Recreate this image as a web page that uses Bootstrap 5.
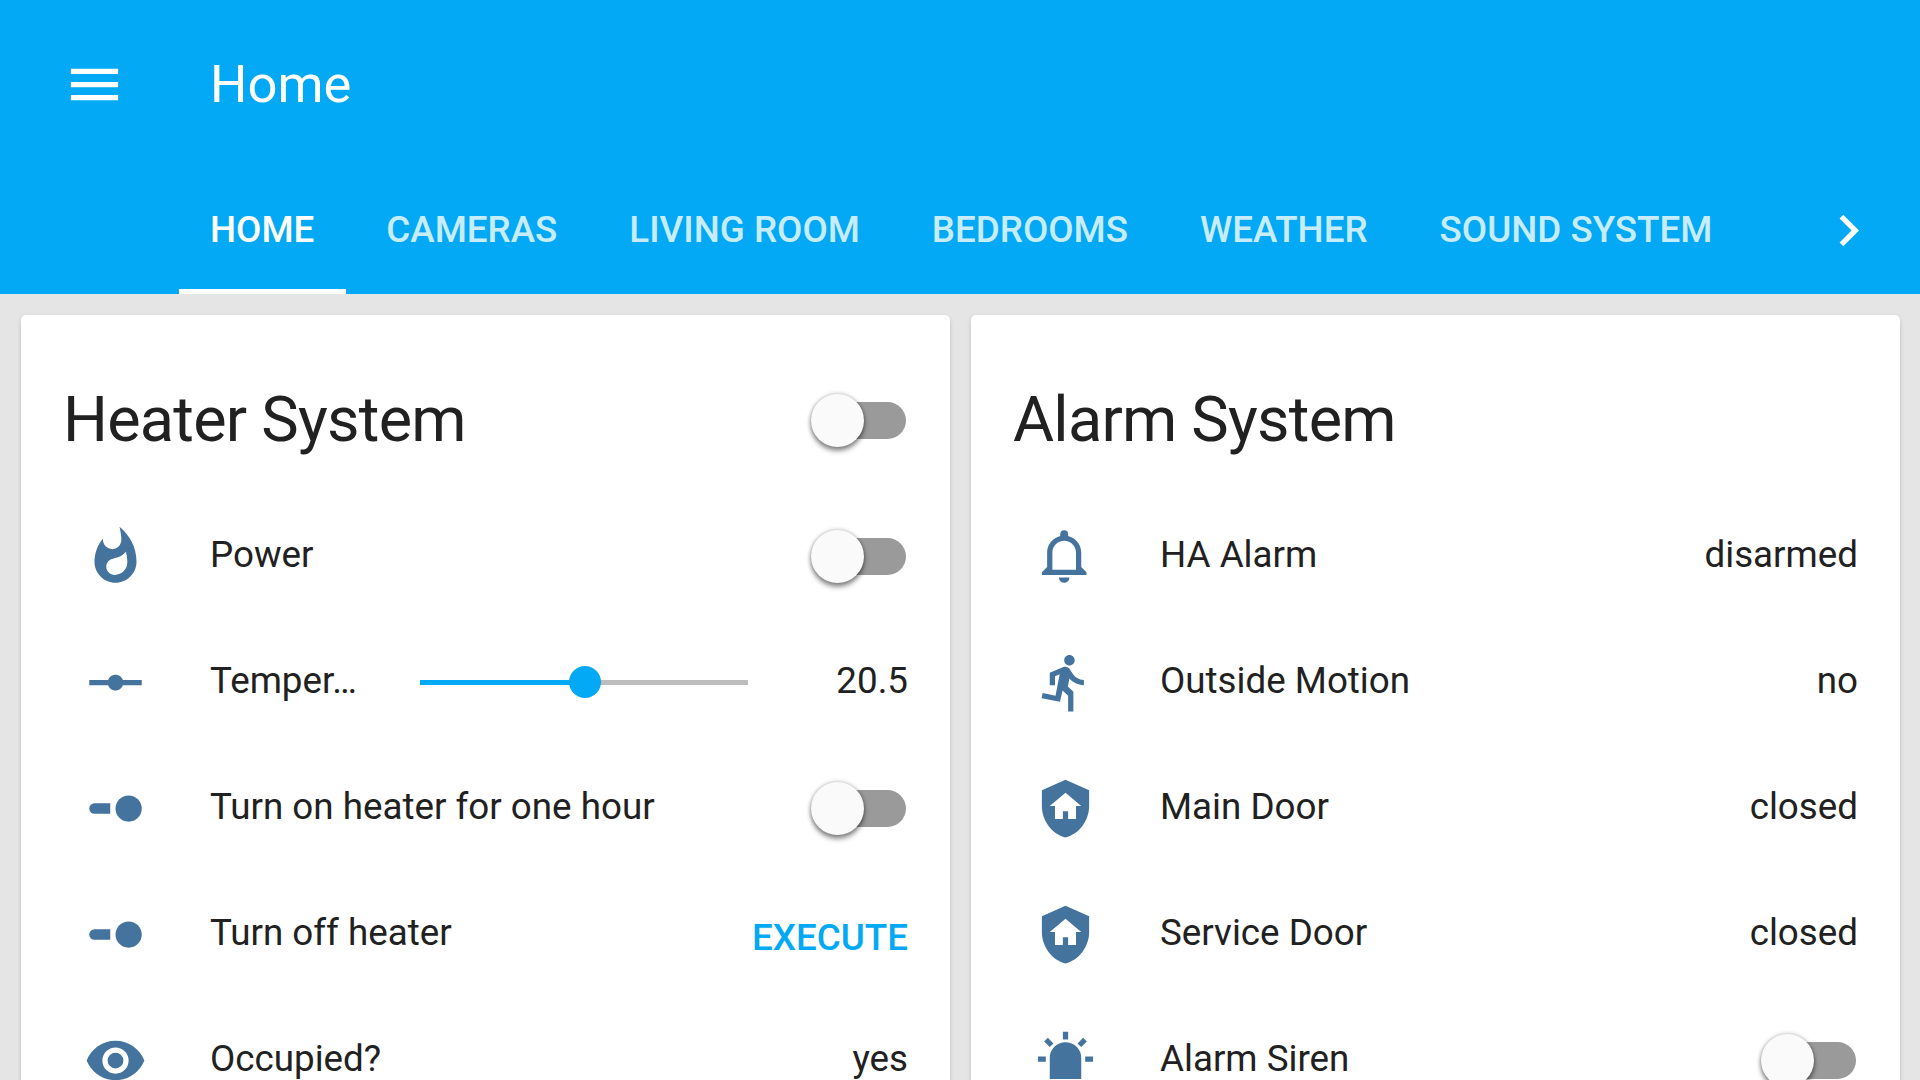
<!DOCTYPE html>
<html lang="en">
<head>
  <meta charset="UTF-8">
  <title>Home</title>
  <link href="https://cdn.jsdelivr.net/npm/bootstrap@5.3.0/dist/css/bootstrap.min.css" rel="stylesheet">
  <style>
    html, body { height: 1080px; overflow: hidden; }
    body { background: #e5e5e5; font-family: Roboto, "Liberation Sans", sans-serif; color: #212121; font-size: 36.75px; }
    .ha-header { background: #03a9f4; color: #fff; height: 294px; }
    .ha-toolbar { height: 168px; padding-left: 63px; }
    .ha-toolbar svg { fill: #fff; }
    .ha-title { font-size: 52.5px; margin-left: 84px; line-height: 1; }
    .ha-tabs { height: 126px; padding-left: 174px; }
    .ha-tabs .nav-link { color: rgba(255,255,255,.8); font-size: 36.75px; font-weight: 500; padding: 0 36px; height: 126px; line-height: 124px; position: relative; }
    .ha-tabs .nav-link.active { color: #fff; }
    .ha-tabs .nav-link.active::after { content: ""; position: absolute; left: 5px; right: 4px; bottom: 0; height: 5px; background: #fff; }
    .ha-chevron { fill: #fff; margin-left: auto; margin-right: 40px; margin-top: 31px; }
    .ha-cards { padding: 21px 20px 0 21px; gap: 21px; }
    .ha-card { width: 929px; flex: none; height: 1000px; border: 0; border-radius: 5px; padding: 0 42px; box-shadow: 0 5px 5px -3px rgba(0,0,0,.2), 0 2px 5px rgba(0,0,0,.14); }
    .ha-card-head { height: 177px; padding-top: 31px; }
    .ha-card-title { font-size: 63px; font-weight: 400; line-height: 1; letter-spacing: -.012em; margin: 0; }
    .ha-row { height: 126px; }
    .ha-icon { width: 63px; height: 63px; flex: none; margin: 2px 0 0 21px; fill: #44739e; }
    .ha-label { margin-left: 63px; white-space: nowrap; }
    .ha-val { margin-left: auto; white-space: nowrap; }
    .ha-switch { position: relative; width: 84px; height: 37px; background: #9a9a9a; border-radius: 19px; margin-left: auto; margin-right: 2px; margin-top: 3px; }
    .ha-switch::before { content: ""; position: absolute; left: -11px; top: -8px; width: 53px; height: 53px; border-radius: 50%; background: #fafafa; box-shadow: 0 4px 5px rgba(0,0,0,.42), 0 0 4px rgba(0,0,0,.3); }
    .ha-temp { width: 150px; margin-left: 63px; white-space: nowrap; flex: none; }
    .ha-slider { position: relative; width: 328px; height: 5px; background: #bdbdbd; margin-left: 60px; margin-top: 3px; }
    .ha-slider-fill { height: 5px; background: #03a9f4; }
    .ha-slider-knob { position: absolute; top: -14px; width: 32px; height: 32px; margin-left: -16px; background: #03a9f4; border-radius: 50%; }
    .ha-exec { color: #03a9f4; font-weight: 500; margin-left: auto; text-decoration: none; margin-top: 9px; }
  </style>
</head>
<body>
  <header class="ha-header">
    <div class="ha-toolbar d-flex align-items-center">
      <svg width="63" height="63" viewBox="0 0 24 24"><path d="M3,6H21V8H3V6M3,11H21V13H3V11M3,16H21V18H3V16Z"/></svg>
      <div class="ha-title">Home</div>
    </div>
    <ul class="nav ha-tabs flex-nowrap">
      <li class="nav-item"><a class="nav-link active" href="#">HOME</a></li>
      <li class="nav-item"><a class="nav-link" href="#">CAMERAS</a></li>
      <li class="nav-item"><a class="nav-link" href="#">LIVING ROOM</a></li>
      <li class="nav-item"><a class="nav-link" href="#">BEDROOMS</a></li>
      <li class="nav-item"><a class="nav-link" href="#">WEATHER</a></li>
      <li class="nav-item"><a class="nav-link" href="#">SOUND SYSTEM</a></li>
      <svg class="ha-chevron" width="63" height="63" viewBox="0 0 24 24"><path d="M8.59,16.58L13.17,12L8.59,7.41L10,6L16,12L10,18L8.59,16.58Z"/></svg>
    </ul>
  </header>

  <main class="ha-cards d-flex">
    <section class="card ha-card">
      <div class="ha-card-head d-flex align-items-center">
        <h1 class="ha-card-title">Heater System</h1>
        <div class="ha-switch"></div>
      </div>
      <div class="ha-row d-flex align-items-center">
        <svg class="ha-icon" viewBox="0 0 24 24"><path d="M13.5.67s.74 2.65.74 4.8c0 2.06-1.35 3.73-3.41 3.73-2.07 0-3.63-1.67-3.63-3.73l.03-.36C5.21 7.51 4 10.62 4 14c0 4.42 3.58 8 8 8s8-3.58 8-8C20 8.61 17.41 3.8 13.5.67zM11.71 19c-1.78 0-3.22-1.4-3.22-3.14 0-1.62 1.05-2.76 2.81-3.12 1.77-.36 3.6-1.21 4.62-2.58.39 1.29.59 2.65.59 4.04 0 2.65-2.15 4.8-4.8 4.8z"/></svg>
        <span class="ha-label">Power</span>
        <div class="ha-switch"></div>
      </div>
      <div class="ha-row d-flex align-items-center">
        <svg class="ha-icon" viewBox="0 0 24 24"><path d="M2,11H9.17C9.58,9.83 10.69,9 12,9C13.31,9 14.42,9.83 14.83,11H22V13H14.83C14.42,14.17 13.31,15 12,15C10.69,15 9.58,14.17 9.17,13H2V11Z"/></svg>
        <span class="ha-temp">Temper…</span>
        <div class="ha-slider">
          <div class="ha-slider-fill" style="width: 50.2%"></div>
          <div class="ha-slider-knob" style="left: 50.2%"></div>
        </div>
        <span class="ha-val">20.5</span>
      </div>
      <div class="ha-row d-flex align-items-center">
        <svg class="ha-icon" viewBox="0 0 24 24"><path d="M4,10H10V14H4A2,2 0 0,1 4,10Z"/><circle cx="17" cy="12" r="5"/></svg>
        <span class="ha-label">Turn on heater for one hour</span>
        <div class="ha-switch"></div>
      </div>
      <div class="ha-row d-flex align-items-center">
        <svg class="ha-icon" viewBox="0 0 24 24"><path d="M4,10H10V14H4A2,2 0 0,1 4,10Z"/><circle cx="17" cy="12" r="5"/></svg>
        <span class="ha-label">Turn off heater</span>
        <a class="ha-exec" href="#">EXECUTE</a>
      </div>
      <div class="ha-row d-flex align-items-center">
        <svg class="ha-icon" viewBox="0 0 24 24"><path d="M12,9A3,3 0 0,0 9,12A3,3 0 0,0 12,15A3,3 0 0,0 15,12A3,3 0 0,0 12,9M12,17A5,5 0 0,1 7,12A5,5 0 0,1 12,7A5,5 0 0,1 17,12A5,5 0 0,1 12,17M12,4.5C7,4.5 2.73,7.61 1,12C2.73,16.39 7,19.5 12,19.5C17,19.5 21.27,16.39 23,12C21.27,7.61 17,4.5 12,4.5Z"/></svg>
        <span class="ha-label">Occupied?</span>
        <span class="ha-val">yes</span>
      </div>
    </section>

    <section class="card ha-card">
      <div class="ha-card-head d-flex align-items-center">
        <h1 class="ha-card-title">Alarm System</h1>
      </div>
      <div class="ha-row d-flex align-items-center">
        <svg class="ha-icon" viewBox="0 0 24 24"><path d="M16,17H7V10.5C7,8 9,6 11.5,6C14,6 16,8 16,10.5M18,16V10.5C18,7.43 15.86,4.86 13,4.18V3.5A1.5,1.5 0 0,0 11.5,2A1.5,1.5 0 0,0 10,3.5V4.18C7.13,4.86 5,7.43 5,10.5V16L3,18V19H20V18M11.5,22A2,2 0 0,0 13.5,20H9.5A2,2 0 0,0 11.5,22Z"/></svg>
        <span class="ha-label">HA Alarm</span>
        <span class="ha-val">disarmed</span>
      </div>
      <div class="ha-row d-flex align-items-center">
        <svg class="ha-icon" viewBox="0 0 24 24"><path d="M13.5,5.5C14.59,5.5 15.5,4.58 15.5,3.5C15.5,2.38 14.59,1.5 13.5,1.5C12.39,1.5 11.5,2.38 11.5,3.5C11.5,4.58 12.39,5.5 13.5,5.5M9.89,19.38L10.89,15L13,17V23H15V15.5L12.89,13.5L13.5,10.5C14.79,12 16.79,13 19,13V11C17.09,11 15.5,10 14.69,8.58L13.69,7C13.29,6.38 12.69,6 12,6C11.69,6 11.5,6.08 11.19,6.08L6,8.28V13H8V9.58L9.79,8.88L8.19,17L3.29,16L2.89,18L9.89,19.38Z"/></svg>
        <span class="ha-label">Outside Motion</span>
        <span class="ha-val">no</span>
      </div>
      <div class="ha-row d-flex align-items-center">
        <svg class="ha-icon" viewBox="0 0 24 24"><path d="M11 13H13V16H16V11H18L12 6L6 11H8V16H11V13M12 1L21 5V11C21 16.55 17.16 21.74 12 23C6.84 21.74 3 16.55 3 11V5L12 1Z"/></svg>
        <span class="ha-label">Main Door</span>
        <span class="ha-val">closed</span>
      </div>
      <div class="ha-row d-flex align-items-center">
        <svg class="ha-icon" viewBox="0 0 24 24"><path d="M11 13H13V16H16V11H18L12 6L6 11H8V16H11V13M12 1L21 5V11C21 16.55 17.16 21.74 12 23C6.84 21.74 3 16.55 3 11V5L12 1Z"/></svg>
        <span class="ha-label">Service Door</span>
        <span class="ha-val">closed</span>
      </div>
      <div class="ha-row d-flex align-items-center">
        <svg class="ha-icon" viewBox="0 0 24 24"><path d="M6,6.9L3.87,4.78L5.28,3.37L7.4,5.5L6,6.9M13,1V4H11V1H13M20.13,4.78L18,6.9L16.6,5.5L18.72,3.37L20.13,4.78M4.5,10.5V12.5H1.5V10.5H4.5M19.5,10.5H22.5V12.5H19.5V10.5M6,20H18A2,2 0 0,1 20,22H4A2,2 0 0,1 6,20M12,5A6,6 0 0,1 18,11V19H6V11A6,6 0 0,1 12,5Z"/></svg>
        <span class="ha-label">Alarm Siren</span>
        <div class="ha-switch"></div>
      </div>
    </section>
  </main>

  <script src="https://cdn.jsdelivr.net/npm/bootstrap@5.3.0/dist/js/bootstrap.bundle.min.js"></script>
</body>
</html>
